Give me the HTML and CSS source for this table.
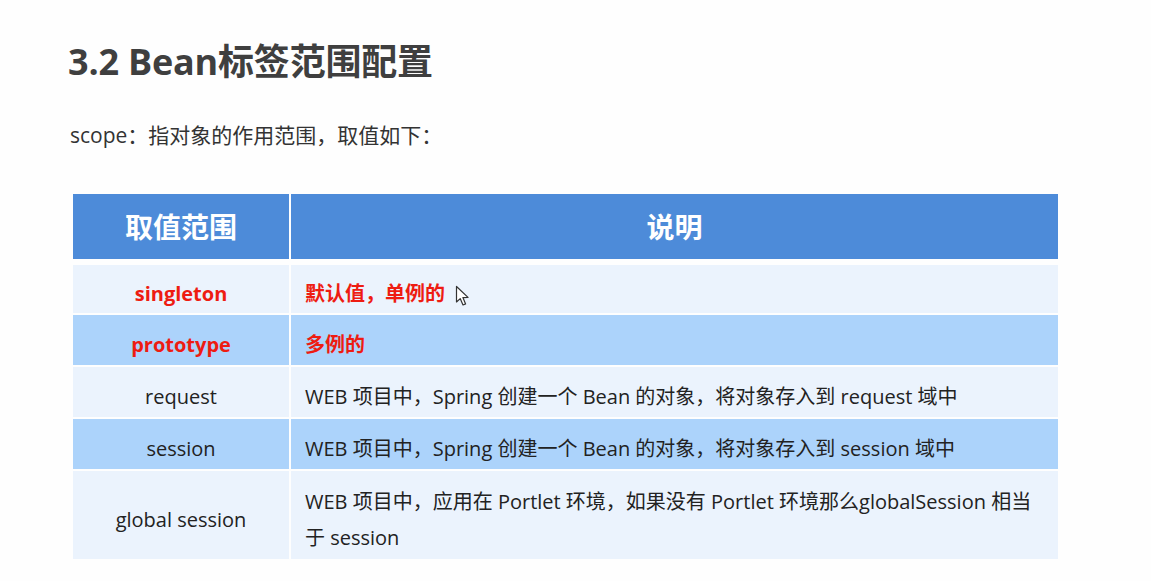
FILE: index.html
```html
<!DOCTYPE html>
<html lang="zh-CN">
<head>
<meta charset="utf-8">
<title>3.2 Bean标签范围配置</title>
<link rel="stylesheet" href="styles.css">
</head>
<body>
<div class="slide">
  <h1 class="title">3.2 Bean标签范围配置</h1>
  <p class="intro">scope：指对象的作用范围，取值如下：</p>
  <div class="table">
    <div class="cell head">取值范围</div>
    <div class="cell head">说明</div>

    <div class="cell key light red">singleton</div>
    <div class="cell desc light red">默认值，单例的
      <span class="cursor"><svg width="16" height="22" viewBox="0 0 16 22"><path d="M1.5 1.5 L1.5 17 L5.2 13.6 L8 20 L10.6 18.9 L7.9 12.6 L13 12.4 Z" fill="#fff" stroke="#333" stroke-width="1.2" stroke-linejoin="round"/></svg></span>
    </div>

    <div class="cell key blue red">prototype</div>
    <div class="cell desc blue red">多例的</div>

    <div class="cell key light">request</div>
    <div class="cell desc light">WEB 项目中，Spring 创建一个 Bean 的对象，将对象存入到 request 域中</div>

    <div class="cell key blue">session</div>
    <div class="cell desc blue">WEB 项目中，Spring 创建一个 Bean 的对象，将对象存入到 session 域中</div>

    <div class="cell key light tall">global session</div>
    <div class="cell desc light tall">WEB 项目中，应用在 Portlet 环境，如果没有 Portlet 环境那么globalSession 相当于 session</div>
  </div>
</div>
</body>
</html>
```

FILE: styles.css
```css
html, body {
  margin: 0;
  padding: 0;
  background: #fefefe;
}
body {
  font-family: "Open Sans", "Noto Sans CJK SC", sans-serif;
  color: #222;
}
.slide {
  width: 1151px;
  height: 581px;
  overflow: hidden;
  padding: 36px 0 0 68px;
  box-sizing: border-box;
}
.title {
  margin: 0;
  font-size: 36px;
  font-weight: 700;
  color: #3f3f3f;
  line-height: 52px;
  letter-spacing: -0.2px;
}
.intro {
  margin: 33px 0 0 2px;
  font-size: 21px;
  line-height: 28px;
  color: #333;
}
.table {
  margin: 45px 0 0 5px;
  width: 985px;
  display: grid;
  grid-template-columns: 216px 767px;
  grid-template-rows: 69px 48px 50px 50px 50px 88px;
  column-gap: 2px;
  row-gap: 2px;
}
.cell {
  display: flex;
  align-items: center;
  font-size: 20px;
  line-height: 36px;
  padding-top: 10px;
  box-sizing: border-box;
}
.head {
  background: #4d8bd9;
  color: #fff;
  font-weight: 700;
  font-size: 28px;
  justify-content: center;
  margin-bottom: 4px;
  padding-top: 0;
}
.key {
  justify-content: center;
}
.desc {
  padding-left: 14px;
  padding-right: 10px;
}
.light { background: #ebf3fd; }
.blue { background: #acd3fb; }
.red {
  color: #ee1c12;
  font-weight: 700;
}
.cursor {
  display: inline-flex;
  margin-left: 10px;
  margin-top: 4px;
}
```
